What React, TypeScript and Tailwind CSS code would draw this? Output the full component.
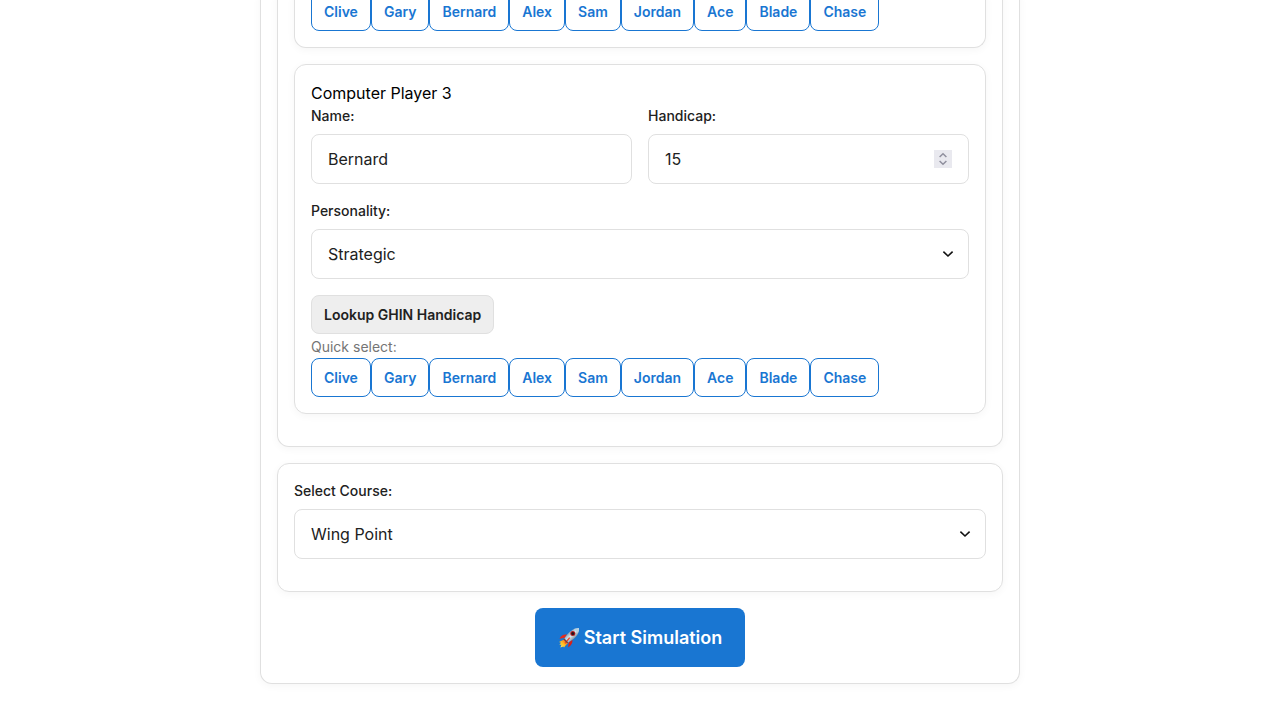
import { useId, useState } from 'react';
import type { ReactNode } from 'react';

const QUICK_NAMES = ['Clive', 'Gary', 'Bernard', 'Alex', 'Sam', 'Jordan', 'Ace', 'Blade', 'Chase'];

const card = 'rounded-xl border border-[#e0e0e0] bg-white p-4 shadow-[0_2px_8px_rgba(0,0,0,0.04)]';
const openTopCard =
  'rounded-b-xl border border-t-0 border-[#e0e0e0] bg-white px-4 pb-4 shadow-[0_2px_8px_rgba(0,0,0,0.04)]';
const field =
  'block h-[50px] w-full appearance-none rounded-lg border border-[#e0e0e0] bg-white px-4 text-base text-[#212121] outline-none';
const labelText = 'mb-2 block text-sm leading-[21px] font-medium text-[#212121]';

function Chevron() {
  return (
    <svg
      className="pointer-events-none absolute top-[17px] right-[13px] size-4"
      viewBox="0 0 16 16"
      fill="none"
      stroke="#111"
      strokeWidth="1.6"
      aria-hidden="true"
    >
      <path d="M3.400 5.700 8 10l4.600-4.300" />
    </svg>
  );
}

function Rocket() {
  return (
    <svg className="size-[22px]" viewBox="0 0 22 22" aria-hidden="true">
      <defs>
        <linearGradient id="hull" x1="0" y1="0" x2="1" y2="1">
          <stop offset="0.2" stopColor="#5f7f96" />
          <stop offset="0.5" stopColor="#dbe9f1" />
          <stop offset="0.85" stopColor="#42586b" />
        </linearGradient>
        <linearGradient id="flame" x1="1" y1="0" x2="0" y2="1">
          <stop offset="0" stopColor="#f2391c" />
          <stop offset="0.55" stopColor="#ffbd20" />
          <stop offset="1" stopColor="#fff06a" />
        </linearGradient>
      </defs>
      <path d="M6.6 12.2 1 15l2 .7-1.6 2 2 .1-1 2.7 3-1 .6 1 1.5-2 3.1-3z" fill="url(#flame)" />
      <path d="M9 7.6C6.100 7 3.200 8.300 1.500 11.700l5.300-1z" fill="#e52b1d" />
      <path d="M14.300 12.500c.7 3-.7 6-4.200 7.900l.7-5z" fill="#d82018" />
      <path d="M21 1.200c-5-.3-9.600 2.500-14.700 10.300l3.900 4C18 11 21.500 6.500 21 1.200z" fill="url(#hull)" />
      <path d="M21 1.200c-2-.2-3.500.1-5.100.8l3.900 4c1-1.700 1.300-3.200 1.200-4.800z" fill="#b9d2e2" />
      <circle cx="14.800" cy="6.500" r="2.500" fill="#b51c20" />
      <circle cx="14.800" cy="6.500" r="1.500" fill="#26141c" />
      <path d="m11.100 10.200-4.700 5.900 1.200.6 4.700-5.600z" fill="#f04424" />
      <path d="m6.300 11.500 3.900 4-1.100.8-3.700-3.700z" fill="#764037" />
    </svg>
  );
}

function SelectField({ label, options }: { label: string; options: string[] }) {
  const id = useId();
  return (
    <div className="mb-4">
      <label htmlFor={id} className={labelText}>
        {label}
      </label>
      <div className="relative">
        <select id={id} className={field}>
          {options.map((option) => (
            <option key={option}>{option}</option>
          ))}
        </select>
        <Chevron />
      </div>
    </div>
  );
}

function QuickSelect({ onPick }: { onPick?: (name: string) => void }) {
  return (
    <div className="flex flex-wrap">
      {QUICK_NAMES.map((name) => (
        <button
          key={name}
          type="button"
          onClick={() => onPick?.(name)}
          className="rounded-lg border border-[#1976d2] bg-white px-3 py-2 text-sm leading-[21px] font-semibold text-[#1976d2]"
        >
          {name}
        </button>
      ))}
    </div>
  );
}

function Field({ id, label, children }: { id: string; label: string; children: ReactNode }) {
  return (
    <div className="mb-4 min-w-0 flex-1">
      <label htmlFor={id} className={labelText}>
        {label}
      </label>
      {children}
    </div>
  );
}

function PlayerCard() {
  const [name, setName] = useState('Bernard');
  const [handicap, setHandicap] = useState(15);
  return (
    <div className={card}>
      <h3 className="text-base leading-6 font-normal text-black">Computer Player 3</h3>
      <div className="flex gap-4">
        <Field id="player-name" label="Name:">
          <input
            id="player-name"
            type="text"
            value={name}
            onChange={(e) => setName(e.target.value)}
            className={field}
          />
        </Field>
        <Field id="player-handicap" label="Handicap:">
          <div className="relative">
            <input
              id="player-handicap"
              type="number"
              value={handicap}
              onChange={(e) => setHandicap(Number(e.target.value))}
              className={`${field} [appearance:textfield] [&::-webkit-inner-spin-button]:appearance-none`}
            />
            <div className="absolute top-4 right-[17px] flex h-[18px] w-[18px] flex-col bg-[#e9e9ef]">
              <button
                type="button"
                aria-label="Increase handicap"
                onClick={() => setHandicap(handicap + 1)}
                className="flex h-[9px] items-end justify-center"
              >
                <svg className="h-2 w-3" viewBox="0 0 12 8" fill="none" stroke="#8f8f9d" strokeWidth="1.5">
                  <path d="M2.600 6 6 2.800 9.400 6" />
                </svg>
              </button>
              <button
                type="button"
                aria-label="Decrease handicap"
                onClick={() => setHandicap(handicap - 1)}
                className="flex h-[9px] items-start justify-center"
              >
                <svg className="h-2 w-3" viewBox="0 0 12 8" fill="none" stroke="#8f8f9d" strokeWidth="1.5">
                  <path d="M2.600 2 6 5.200 9.400 2" />
                </svg>
              </button>
            </div>
          </div>
        </Field>
      </div>
      <SelectField label="Personality:" options={['Strategic', 'Aggressive', 'Conservative', 'Balanced']} />
      <button
        type="button"
        className="block rounded-lg border border-[#e0e0e0] bg-[#eeeeee] px-3 py-2 text-sm leading-[21px] font-semibold text-[#212121]"
      >
        Lookup GHIN Handicap
      </button>
      <p className="pt-0.5 text-sm leading-[22px] text-[#757575]">Quick select:</p>
      <QuickSelect onPick={setName} />
    </div>
  );
}

export default function App() {
  return (
    <div className="min-h-screen overflow-hidden bg-white px-4 pb-9 font-['Inter',sans-serif]">
      <main className={`mx-auto -mt-2 max-w-[760px] ${openTopCard}`}>
        <section className={`mb-4 ${openTopCard}`}>
          <div className={`mb-4 ${openTopCard}`}>
            <QuickSelect />
          </div>
          <div className="mb-4">
            <PlayerCard />
          </div>
        </section>
        <section className={`mb-4 ${card}`}>
          <SelectField label="Select Course:" options={['Wing Point']} />
        </section>
        <button
          type="button"
          className="mx-auto flex items-center gap-1 rounded-lg bg-[#1976d2] px-[23px] py-4 text-lg leading-[27px] font-semibold text-white"
        >
          <Rocket />
          Start Simulation
        </button>
      </main>
    </div>
  );
}
